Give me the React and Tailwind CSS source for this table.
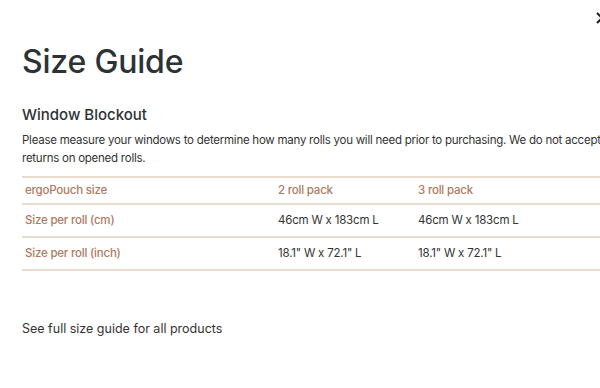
export default function App() {
  const font = { fontFamily: 'Inter, "Noto Sans", sans-serif' };
  return (
    <div className="relative w-[600px] h-[388px] overflow-hidden bg-white text-[#2f3336]" style={font}>
      <svg className="absolute left-[595px] top-[11px]" width="14" height="14" viewBox="0 0 14 14">
        <path d="M2 2 L12 12 M12 2 L2 12" stroke="#222" strokeWidth="2" />
      </svg>
      <div className="pl-[22px] pt-[46px] w-[640px]">
        <h1 className="text-[32px] leading-none font-medium tracking-[-0.2px] text-[#2d3335]">Size Guide</h1>
        <h2 className="mt-[28px] text-[15px] leading-[18px] font-medium text-[#2d3335]">Window Blockout</h2>
        <p className="mt-[7px] text-[11.5px] tracking-[-0.25px] leading-[18px] text-[#333] whitespace-nowrap">
          Please measure your windows to determine how many rolls you will need prior to purchasing. We do not accept
          <br />
          returns on opened rolls.
        </p>
        <div className="mt-[9px] border-t-2 border-[#eadccd] text-[11.5px] tracking-[-0.2px]">
          <div className="grid grid-cols-[253px_140px_1fr] h-[27px] items-center border-b-2 border-[#eadccd] text-[#ad7a61] font-medium">
            <div className="pl-[3px]">ergoPouch size</div>
            <div className="pl-[3px]">2 roll pack</div>
            <div className="pl-[3px]">3 roll pack</div>
          </div>
          <div className="grid grid-cols-[253px_140px_1fr] h-[33px] items-center border-b-2 border-[#eadccd]">
            <div className="pl-[3px] text-[#ad7a61] font-medium">Size per roll (cm)</div>
            <div className="pl-[3px] text-[#333]">46cm W x 183cm L</div>
            <div className="pl-[3px] text-[#333]">46cm W x 183cm L</div>
          </div>
          <div className="grid grid-cols-[253px_140px_1fr] h-[33px] items-center border-b-2 border-[#eadccd]">
            <div className="pl-[3px] text-[#ad7a61] font-medium">Size per roll (inch)</div>
            <div className="pl-[3px] text-[#333]">18.1" W x 72.1" L</div>
            <div className="pl-[3px] text-[#333]">18.1" W x 72.1" L</div>
          </div>
        </div>
        <p className="mt-[49px] text-[12.5px] leading-[18px] text-[#333]">See full size guide for all products</p>
      </div>
    </div>
  );
}
